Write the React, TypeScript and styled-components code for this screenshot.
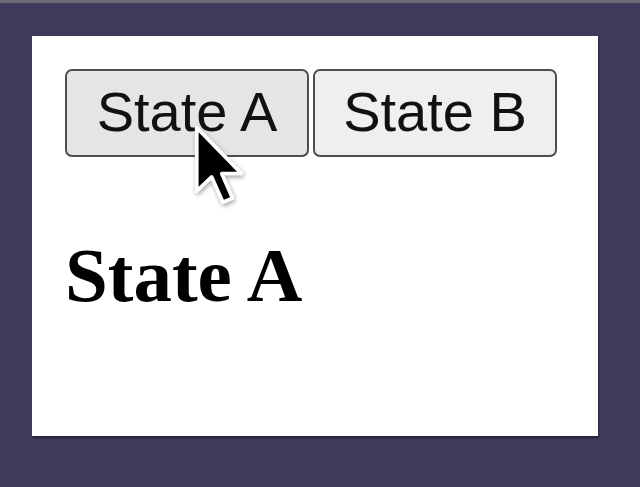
import styled, { createGlobalStyle } from "styled-components";

const GlobalStyle = createGlobalStyle`
  html, body {
    margin: 0;
    padding: 0;
    background: #413b5b;
  }
`;

const Page = styled.div`
  width: 640px;
  height: 487px;
  box-sizing: border-box;
  border-top: 3px solid #6c6a74;
  padding: 33px 0 0 32px;
  overflow: hidden;
`;

const Panel = styled.div`
  position: relative;
  width: 566px;
  height: 400px;
  box-sizing: border-box;
  background: #ffffff;
  padding: 33px 0 0 33px;
  box-shadow: 1px 2px 2px rgba(20, 15, 35, 0.6);
`;

const Toolbar = styled.div`
  display: flex;
  gap: 4px;
`;

const Button = styled.button<{ $hover?: boolean }>`
  height: 88px;
  width: 244px;
  padding: 0 0 4px;
  box-sizing: border-box;
  border: 2px solid #4e4e4e;
  border-radius: 7px;
  background: ${(p) => (p.$hover ? "#e5e5e5" : "#efefef")};
  color: #111;
  font-family: "Liberation Sans", Arial, sans-serif;
  font-size: 56px;
  cursor: default;
`;

const Heading = styled.h2`
  margin: 74px 0 0;
  font-family: "Liberation Serif", "Times New Roman", serif;
  font-weight: bold;
  font-size: 77px;
  color: #000;
`;

const Pointer = styled.svg`
  position: absolute;
  left: 161px;
  top: 87px;
  width: 56px;
  height: 84px;
  filter: drop-shadow(1px 2px 2px rgba(0, 0, 0, 0.35));
`;

export default function App() {
  return (
    <>
      <GlobalStyle />
      <Page>
        <Panel>
          <Toolbar>
            <Button $hover>State A</Button>
            <Button>State B</Button>
          </Toolbar>
          <Heading>State A</Heading>
          <Pointer viewBox="-1 -1 15 22">
            <path
              d="M0 0 L0 17 L4 13.2 L7 20 L9.6 18.9 L6.7 12.3 L12 12.3 Z"
              fill="#000"
              stroke="#fff"
              strokeWidth="1"
              strokeLinejoin="round"
            />
          </Pointer>
        </Panel>
      </Page>
    </>
  );
}
